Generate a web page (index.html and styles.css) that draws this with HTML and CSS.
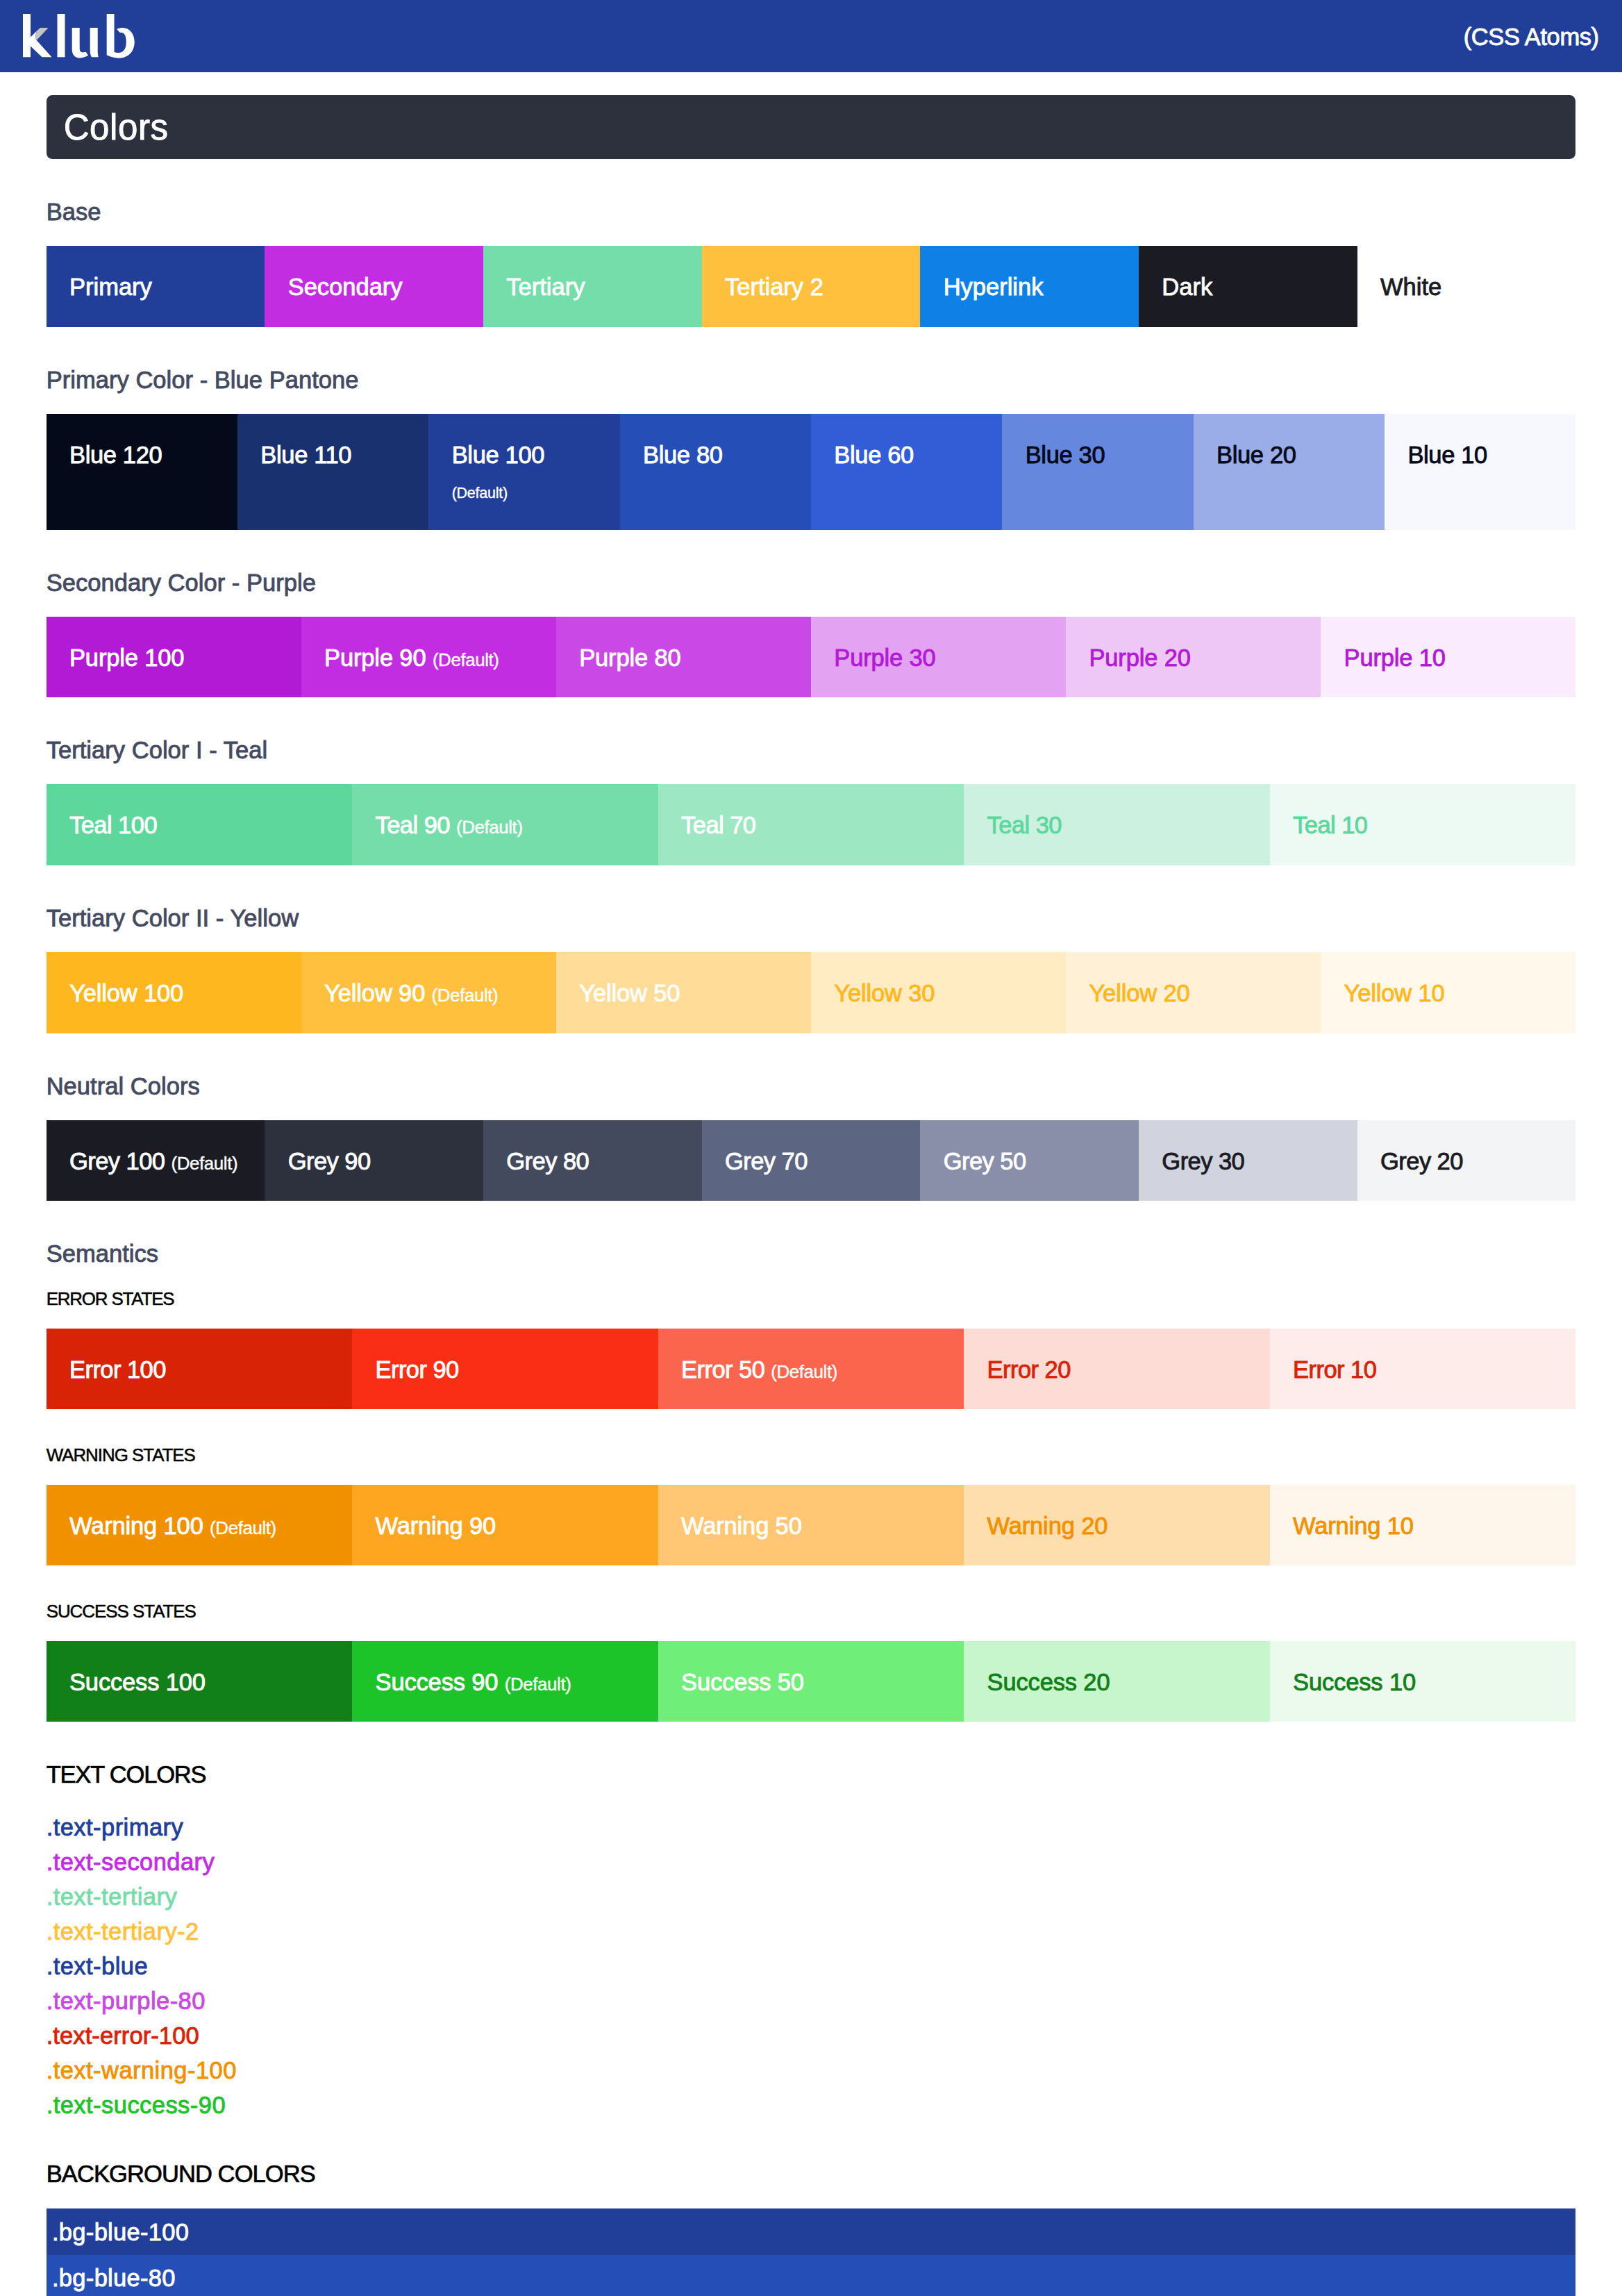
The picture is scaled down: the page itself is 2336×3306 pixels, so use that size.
FILE: index.html
```html
<!DOCTYPE html>
<html lang="en">
<head>
<meta charset="utf-8">
<title>Klub CSS Atoms</title>
<link rel="stylesheet" href="styles.css">
</head>
<body>
<header class="topbar">
  <svg class="logo" viewBox="0 0 168 70" role="img" aria-label="klub">
    <g fill="#fff">
      <path d="M0 0H11V33.5L20 24.5C18 30 18 35 19.7 38L41.5 62.3H27.5L11 46.5V62.3H0z"/>
      <path d="M49.5 0H60.5V62.3H49.5z"/>
      <path d="M70.7 20H81.7V49C81.7 55 84.5 56.5 89.5 54.8L91 55L94 60C79 67.5 70.7 62 70.7 51z"/>
      <path d="M96.7 20H107.7V54Q107.7 59 108.7 62.3H99Q96.7 59 96.7 53z"/>
      <path d="M120.7 0H131.5V55C142 58.5 148.7 53 148.7 41C148.7 31 146.5 26.5 139.5 26.8L135 21.7C150 15.5 160.7 26 160.7 40.5C160.7 60 143 70 120.7 59.3z"/>
    </g>
    <path fill="#c4c4c6" d="M25 20H36.5L19.7 38Q17.5 32 20 24.5z"/>
  </svg>
  <span class="tagline">(CSS Atoms)</span>
</header>
<main class="page">
  <h1 class="title">Colors</h1>

  <h2>Base</h2>
  <div class="row words">
    <div class="swatch bg-blue-100">Primary</div><div class="swatch bg-purple-90">Secondary</div><div class="swatch bg-teal-90">Tertiary</div><div class="swatch bg-yellow-90">Tertiary 2</div><div class="swatch bg-link">Hyperlink</div><div class="swatch bg-grey-100">Dark</div><div class="swatch on-grey">White</div>
  </div>

  <h2>Primary Color - Blue Pantone</h2>
  <div class="row tall">
    <div class="swatch bg-blue-120">Blue 120</div><div class="swatch bg-blue-110">Blue 110</div><div class="swatch bg-blue-100">Blue 100 <small>(Default)</small></div><div class="swatch bg-blue-80">Blue 80</div><div class="swatch bg-blue-60">Blue 60</div><div class="swatch bg-blue-30 on-blue">Blue 30</div><div class="swatch bg-blue-20 on-blue">Blue 20</div><div class="swatch bg-blue-10 on-blue">Blue 10</div>
  </div>

  <h2>Secondary Color - Purple</h2>
  <div class="row">
    <div class="swatch bg-purple-100">Purple 100</div><div class="swatch bg-purple-90">Purple 90 <small>(Default)</small></div><div class="swatch bg-purple-80">Purple 80</div><div class="swatch bg-purple-30 on-purple">Purple 30</div><div class="swatch bg-purple-20 on-purple">Purple 20</div><div class="swatch bg-purple-10 on-purple">Purple 10</div>
  </div>

  <h2>Tertiary Color I - Teal</h2>
  <div class="row tight">
    <div class="swatch bg-teal-100">Teal 100</div><div class="swatch bg-teal-90">Teal 90 <small>(Default)</small></div><div class="swatch bg-teal-70">Teal 70</div><div class="swatch bg-teal-30 on-teal">Teal 30</div><div class="swatch bg-teal-10 on-teal">Teal 10</div>
  </div>

  <h2>Tertiary Color II - Yellow</h2>
  <div class="row">
    <div class="swatch bg-yellow-100">Yellow 100</div><div class="swatch bg-yellow-90">Yellow 90 <small>(Default)</small></div><div class="swatch bg-yellow-50">Yellow 50</div><div class="swatch bg-yellow-30 on-yellow">Yellow 30</div><div class="swatch bg-yellow-20 on-yellow">Yellow 20</div><div class="swatch bg-yellow-10 on-yellow">Yellow 10</div>
  </div>

  <h2>Neutral Colors</h2>
  <div class="row tight">
    <div class="swatch bg-grey-100">Grey 100 <small>(Default)</small></div><div class="swatch bg-grey-90">Grey 90</div><div class="swatch bg-grey-80">Grey 80</div><div class="swatch bg-grey-70">Grey 70</div><div class="swatch bg-grey-50">Grey 50</div><div class="swatch bg-grey-30 on-grey">Grey 30</div><div class="swatch bg-grey-20 on-grey">Grey 20</div>
  </div>

  <h2>Semantics</h2>
  <h3 class="first">ERROR STATES</h3>
  <div class="row tight">
    <div class="swatch bg-error-100">Error 100</div><div class="swatch bg-error-90">Error 90</div><div class="swatch bg-error-50">Error 50 <small>(Default)</small></div><div class="swatch bg-error-20 on-error">Error 20</div><div class="swatch bg-error-10 on-error">Error 10</div>
  </div>
  <h3>WARNING STATES</h3>
  <div class="row">
    <div class="swatch bg-warning-100">Warning 100 <small>(Default)</small></div><div class="swatch bg-warning-90">Warning 90</div><div class="swatch bg-warning-50">Warning 50</div><div class="swatch bg-warning-20 on-warning">Warning 20</div><div class="swatch bg-warning-10 on-warning">Warning 10</div>
  </div>
  <h3>SUCCESS STATES</h3>
  <div class="row">
    <div class="swatch bg-success-100">Success 100</div><div class="swatch bg-success-90">Success 90 <small>(Default)</small></div><div class="swatch bg-success-50">Success 50</div><div class="swatch bg-success-20 on-success">Success 20</div><div class="swatch bg-success-10 on-success">Success 10</div>
  </div>

  <h4>TEXT COLORS</h4>
  <ul class="texts">
    <li class="text-primary">.text-primary</li>
    <li class="text-secondary">.text-secondary</li>
    <li class="text-tertiary">.text-tertiary</li>
    <li class="text-tertiary-2">.text-tertiary-2</li>
    <li class="text-primary">.text-blue</li>
    <li class="text-purple-80">.text-purple-80</li>
    <li class="on-error text-error">.text-error-100</li>
    <li class="on-warning">.text-warning-100</li>
    <li class="text-success-90">.text-success-90</li>
  </ul>

  <h4 class="bg-title">BACKGROUND COLORS</h4>
  <div class="bar bg-blue-100">.bg-blue-100</div>
  <div class="bar bg-blue-80">.bg-blue-80</div>
</main>
</body>
</html>
```
FILE: styles.css
```css
* { box-sizing: border-box; }
html { overflow: hidden; }
body {
  margin: 0;
  height: 3306px;
  overflow: hidden;
  background: #fff;
  color: #000;
  font: 34.5px/50px "Liberation Sans", Arial, sans-serif;
  -webkit-text-stroke: 0.9px currentColor;
}
h1, h2, h3, h4, ul { margin: 0; padding: 0; font-weight: 400; list-style: none; }

.topbar {
  display: flex;
  align-items: center;
  justify-content: space-between;
  height: 104.17px;
  padding: 0 33.3px;
  background: #213f99;
  color: #fff;
  letter-spacing: -0.4px;
}
.logo { width: 168px; height: 70px; margin-top: 6px; }
.tagline { padding-top: 2px; }

.page { padding: 33.3px 66.67px 0; }
.title {
  height: 91.67px;
  padding: 0 25px;
  border-radius: 8.33px;
  background: #2d303d;
  color: #fff;
  font-size: 51px;
  line-height: 94.5px;
  letter-spacing: 0.6px;
}
h2 { margin-top: 50px; height: 75px; padding-top: 1px; font-size: 34.5px; letter-spacing: 0.04px; color: #444a60; }
h3 { margin-top: 50px; height: 58.33px; font-size: 25.9px; line-height: 33.5px; letter-spacing: -1px; -webkit-text-stroke-width: 0.5px; }
h3.first { margin-top: 0; letter-spacing: -1.15px; }
h4 { margin-top: 50.6px; font-size: 34.5px; letter-spacing: -1.2px; -webkit-text-stroke-width: 0.7px; }
h4.bg-title { margin: 49.5px 0 25px; letter-spacing: -0.9px; }

.row { display: flex; height: 116.67px; letter-spacing: -0.15px; }
.row.words { letter-spacing: 0; }
.row.tight { letter-spacing: -0.55px; }
.row.tall { height: 167.07px; letter-spacing: -0.35px; }
.swatch { flex: 1 1 0; min-width: 0; padding: 34px 0 0 33.33px; color: #fff; white-space: nowrap; }
.swatch small { font-size: 25.9px; letter-spacing: -0.4px; -webkit-text-stroke-width: 0.4px; }
.tall .swatch small { display: block; padding-top: 5px; font-size: 21.5px; letter-spacing: -0.25px; }

.texts { margin-top: 25.5px; letter-spacing: 0.45px; }
.texts .text-error { letter-spacing: 0.1px; }
.bar { height: 66.67px; padding: 8.8px 8.33px 0; color: #fff; letter-spacing: 0.3px; }

.bg-link { background: #0f81e6; }
.bg-blue-120 { background: #050a1b; }
.bg-blue-110 { background: #1a3170; }
.bg-blue-100 { background: #213f99; }
.bg-blue-80 { background: #264eb7; }
.bg-blue-60 { background: #335dd6; }
.bg-blue-30 { background: #6687de; }
.bg-blue-20 { background: #9aade8; }
.bg-blue-10 { background: #f7f8fe; }
.bg-purple-100 { background: #b21ad6; }
.bg-purple-90 { background: #c32de2; }
.bg-purple-80 { background: #ca48e6; }
.bg-purple-30 { background: #e4a3f2; }
.bg-purple-20 { background: #eec7f6; }
.bg-purple-10 { background: #faebfe; }
.bg-teal-100 { background: #5dd79c; }
.bg-teal-90 { background: #75dda9; }
.bg-teal-70 { background: #9de8c2; }
.bg-teal-30 { background: #ccf1e0; }
.bg-teal-10 { background: #edfaf4; }
.bg-yellow-100 { background: #ffb71f; }
.bg-yellow-90 { background: #ffc03d; }
.bg-yellow-50 { background: #ffdd99; }
.bg-yellow-30 { background: #ffecc2; }
.bg-yellow-20 { background: #fff0d6; }
.bg-yellow-10 { background: #fff8eb; }
.bg-grey-100 { background: #1a1b23; }
.bg-grey-90 { background: #2d303d; }
.bg-grey-80 { background: #444a5e; }
.bg-grey-70 { background: #5c6581; }
.bg-grey-50 { background: #898ea9; }
.bg-grey-30 { background: #d1d3df; }
.bg-grey-20 { background: #f3f4f5; }
.bg-error-100 { background: #d82306; }
.bg-error-90 { background: #fa2e14; }
.bg-error-50 { background: #fb654d; }
.bg-error-20 { background: #fedcd6; }
.bg-error-10 { background: #feeceb; }
.bg-warning-100 { background: #f29100; }
.bg-warning-90 { background: #ffa621; }
.bg-warning-50 { background: #ffc773; }
.bg-warning-20 { background: #ffdead; }
.bg-warning-10 { background: #fff6eb; }
.bg-success-100 { background: #128019; }
.bg-success-90 { background: #1cc42a; }
.bg-success-50 { background: #6fee7a; }
.bg-success-20 { background: #c8f6cc; }
.bg-success-10 { background: #ebfaec; }

.on-grey { color: #1a1b23; }
.on-blue { color: #050a1b; }
.on-purple { color: #b21ad6; }
.on-teal { color: #5dd79c; }
.on-yellow { color: #ffb71f; }
.on-error { color: #d82306; }
.on-warning { color: #f29100; }
.on-success { color: #128019; }

.text-primary { color: #213f99; }
.text-secondary { color: #c32de2; }
.text-tertiary { color: #75dda9; }
.text-tertiary-2 { color: #ffc03d; }
.text-purple-80 { color: #ca48e6; }
.text-success-90 { color: #1cc42a; }
```
